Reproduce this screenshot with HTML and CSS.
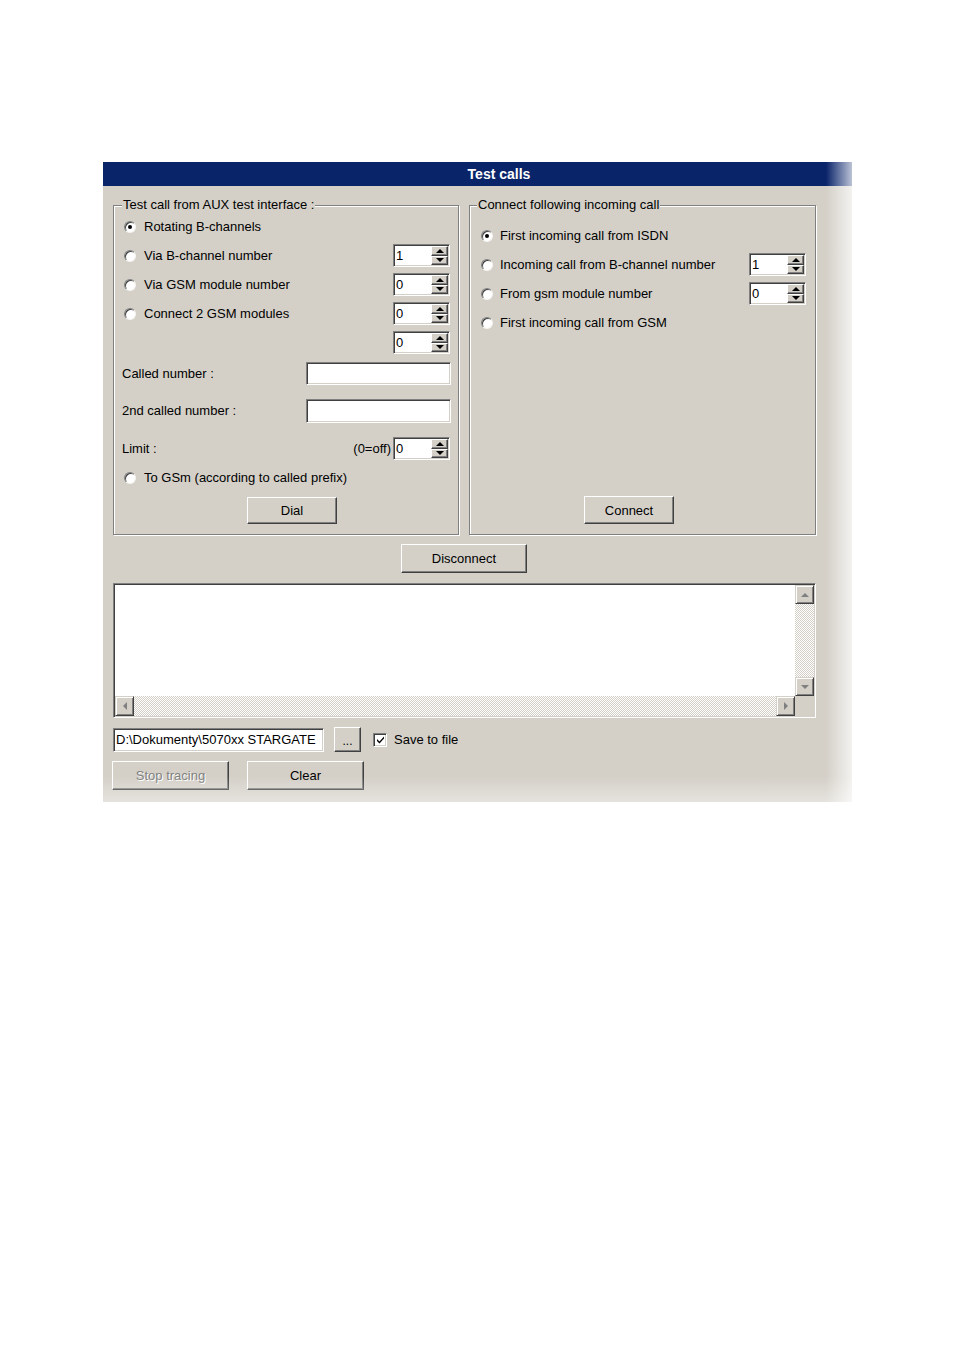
FILE: index.html
```html
<!DOCTYPE html>
<html>
<head>
<meta charset="utf-8">
<title>Test calls</title>
<link rel="stylesheet" href="styles.css">
</head>
<body>
<div class="window">
  <div class="titlebar">Test calls</div>
  <div class="client">
    <div class="groups">
      <fieldset class="group group-left">
        <legend>Test call from AUX test interface :</legend>
        <div class="row"><span class="radio checked"></span><span class="rlabel">Rotating B-channels</span></div>
        <div class="row"><span class="radio"></span><span class="rlabel">Via B-channel number</span>
          <div class="spin"><span class="spin-val">1</span><span class="spin-btns"><span class="sb up"></span><span class="sb down"></span></span></div></div>
        <div class="row"><span class="radio"></span><span class="rlabel">Via GSM module number</span>
          <div class="spin"><span class="spin-val">0</span><span class="spin-btns"><span class="sb up"></span><span class="sb down"></span></span></div></div>
        <div class="row"><span class="radio"></span><span class="rlabel">Connect 2 GSM modules</span>
          <div class="spin"><span class="spin-val">0</span><span class="spin-btns"><span class="sb up"></span><span class="sb down"></span></span></div></div>
        <div class="row">
          <div class="spin"><span class="spin-val">0</span><span class="spin-btns"><span class="sb up"></span><span class="sb down"></span></span></div></div>
        <div class="frow f1"><span>Called number :</span><span class="textbox"></span></div>
        <div class="frow f2"><span>2nd called number :</span><span class="textbox"></span></div>
        <div class="frow f3"><span>Limit :</span><span class="off">(0=off)</span>
          <div class="spin spin-limit"><span class="spin-val">0</span><span class="spin-btns"><span class="sb up"></span><span class="sb down"></span></span></div></div>
        <div class="frow f4"><span class="radio"></span><span class="rlabel">To GSm (according to called prefix)</span></div>
        <div class="btnrow dialrow"><span class="btn btn-dial">Dial</span></div>
      </fieldset>
      <fieldset class="group group-right">
        <legend>Connect following incoming call</legend>
        <div class="row"><span class="radio checked"></span><span class="rlabel r2">First incoming call from ISDN</span></div>
        <div class="row"><span class="radio"></span><span class="rlabel r2">Incoming call from B-channel number</span>
          <div class="spin"><span class="spin-val">1</span><span class="spin-btns"><span class="sb up"></span><span class="sb down"></span></span></div></div>
        <div class="row"><span class="radio"></span><span class="rlabel r2">From gsm module number</span>
          <div class="spin"><span class="spin-val">0</span><span class="spin-btns"><span class="sb up"></span><span class="sb down"></span></span></div></div>
        <div class="row"><span class="radio"></span><span class="rlabel r2">First incoming call from GSM</span></div>
        <div class="btnrow connectrow"><span class="btn btn-connect">Connect</span></div>
      </fieldset>
    </div>
    <div class="discrow"><span class="btn btn-disconnect">Disconnect</span></div>
    <div class="log">
      <div class="log-text"></div>
      <div class="vscroll">
        <span class="sbtn"><span class="arr arr-up"></span></span>
        <span class="track"></span>
        <span class="sbtn"><span class="arr arr-down"></span></span>
      </div>
      <div class="hscroll">
        <span class="sbtn"><span class="arr arr-left"></span></span>
        <span class="track"></span>
        <span class="sbtn"><span class="arr arr-right"></span></span>
      </div>
      <div class="corner"></div>
    </div>
    <div class="filerow">
      <span class="path">D:\Dokumenty\5070xx STARGATE</span>
      <span class="btn btn-dots">...</span>
      <span class="checkbox"><svg width="9" height="9" viewBox="0 0 9 9"><path d="M1 4 L3.5 6.5 L8 1.5 L8 3.5 L3.5 8.5 L1 6 Z" fill="#000"/></svg></span>
      <span class="cblabel">Save to file</span>
    </div>
    <div class="bottomrow">
      <span class="btn btn-wide disabled">Stop tracing</span>
      <span class="btn btn-wide">Clear</span>
    </div>
  </div>
</div>
</body>
</html>
```

FILE: styles.css
```css
body {
  margin: 0;
  background: #fff;
  font-family: "Liberation Sans", Arial, sans-serif;
  font-size: 13px;
  color: #000;
}

.window {
  position: relative;
  width: 749px;
  margin: 162px 0 0 103px;
  background: #d4d0c8;
}

.window::after {
  content: "";
  position: absolute;
  top: 0;
  right: 0;
  bottom: 0;
  width: 26px;
  background: linear-gradient(to right, rgba(255,255,255,0), rgba(255,255,255,0.72));
  pointer-events: none;
}

.window::before {
  content: "";
  position: absolute;
  left: 0;
  right: 0;
  bottom: 0;
  height: 26px;
  background: linear-gradient(to bottom, rgba(255,255,255,0), rgba(255,255,255,0.4));
  pointer-events: none;
  z-index: 1;
}

.titlebar {
  height: 24px;
  background: #0a246a;
  color: #fff;
  font-weight: bold;
  font-size: 14px;
  line-height: 25px;
  text-align: center;
  padding-left: 43px;
}

.client {
  padding: 12px 0 12px 10px;
}

.groups {
  display: flex;
  gap: 10px;
  align-items: stretch;
}

.group {
  margin: 0;
  border: 1px solid #808080;
  box-shadow: inset 1px 1px 0 #fff, 1px 1px 0 #fff;
  display: flex;
  flex-direction: column;
  min-width: 0;
  box-sizing: border-box;
}

.group legend {
  margin-left: 0;
  padding: 0 1px;
  line-height: 14px;
  background: #d4d0c8;
}

.group-left {
  width: 346px;
  padding: 0 8px 10px 8px;
}

.group-right {
  width: 347px;
  padding: 9px 9px 10px 11px;
}

.group-right legend {
  margin-left: -4px;
}

.row {
  height: 29px;
  display: flex;
  align-items: center;
  flex: none;
}

.group-left .radio {
  margin-left: 2px;
}

.radio {
  position: relative;
  width: 12px;
  height: 12px;
  box-sizing: border-box;
  border-radius: 50%;
  background: #fff;
  border: 1px solid;
  border-color: #808080 #f4f3f0 #f4f3f0 #808080;
  box-shadow: inset 1px 1px 0 #404040;
  flex: none;
}

.radio.checked::after {
  content: "";
  position: absolute;
  left: 3px;
  top: 3px;
  width: 4px;
  height: 4px;
  border-radius: 50%;
  background: #000;
}

.rlabel {
  margin-left: 8px;
  white-space: nowrap;
}

.rlabel.r2 {
  margin-left: 7px;
}

.spin {
  margin-left: auto;
  width: 57px;
  height: 23px;
  box-sizing: border-box;
  background: #fff;
  border: 1px solid;
  border-color: #808080 #fff #fff #808080;
  box-shadow: inset 1px 1px 0 #404040, inset -1px -1px 0 #d4d0c8;
  display: flex;
  padding: 1px;
  flex: none;
}

.spin-val {
  flex: 1;
  line-height: 19px;
  padding-left: 1px;
}

.spin-btns {
  width: 17px;
  display: flex;
  flex-direction: column;
}

.sb {
  flex: 1;
  background: #d4d0c8;
  border: 1px solid;
  border-color: #fff #404040 #404040 #fff;
  box-shadow: inset -1px -1px 0 #808080;
  display: flex;
  align-items: center;
  justify-content: center;
}

.sb.up::before {
  content: "";
  border-left: 4px solid transparent;
  border-right: 4px solid transparent;
  border-bottom: 4px solid #000;
}

.sb.down::before {
  content: "";
  border-left: 4px solid transparent;
  border-right: 4px solid transparent;
  border-top: 4px solid #000;
}

.frow {
  height: 23px;
  display: flex;
  align-items: center;
  flex: none;
}

.f1 { margin-top: 5px; }
.f2 { margin-top: 14px; }
.f3 { margin-top: 15px; }
.f4 { margin-top: 6px; }

.textbox {
  margin-left: auto;
  margin-right: -1px;
  width: 145px;
  height: 23px;
  box-sizing: border-box;
  background: #fff;
  border: 1px solid;
  border-color: #808080 #fff #fff #808080;
  box-shadow: inset 1px 1px 0 #404040, inset -1px -1px 0 #d4d0c8;
}

.f2 .textbox {
  height: 24px;
}

.off {
  margin-left: auto;
}

.spin-limit {
  margin-left: 2px;
}

.btnrow {
  display: flex;
  flex: none;
}

.dialrow {
  margin-top: 8px;
}

.connectrow {
  margin-top: auto;
}

.btn {
  display: flex;
  align-items: center;
  justify-content: center;
  box-sizing: border-box;
  background: #d4d0c8;
  border: 1px solid;
  border-color: #fff #404040 #404040 #fff;
  box-shadow: inset -1px -1px 0 #808080;
  white-space: nowrap;
}

.btn-dial {
  margin-left: 125px;
  width: 90px;
  height: 27px;
}

.btn-connect {
  margin-left: 103px;
  width: 90px;
  height: 28px;
}

.discrow {
  margin-top: 9px;
  display: flex;
}

.btn-disconnect {
  margin-left: 288px;
  width: 126px;
  height: 29px;
}

.log {
  margin-top: 10px;
  width: 703px;
  height: 135px;
  box-sizing: border-box;
  background: #fff;
  border: 1px solid;
  border-color: #808080 #fff #fff #808080;
  box-shadow: inset 1px 1px 0 #404040, inset -1px -1px 0 #d4d0c8;
  padding: 1px;
  display: grid;
  grid-template-columns: 1fr 19px;
  grid-template-rows: 1fr 20px;
}

.vscroll {
  display: flex;
  flex-direction: column;
}

.hscroll {
  display: flex;
}

.track {
  flex: 1;
  background: repeating-conic-gradient(#d4d0c8 0% 25%, #fff 0% 50%) 0 0 / 2px 2px;
}

.sbtn {
  width: 19px;
  height: 19px;
  box-sizing: border-box;
  background: #d4d0c8;
  border: 1px solid;
  border-color: #d4d0c8 #404040 #404040 #d4d0c8;
  box-shadow: inset 1px 1px 0 #fff, inset -1px -1px 0 #808080;
  display: flex;
  align-items: center;
  justify-content: center;
  flex: none;
}

.hscroll .sbtn {
  height: 20px;
}

.arr-up {
  border-left: 4px solid transparent;
  border-right: 4px solid transparent;
  border-bottom: 4px solid #808080;
}

.arr-down {
  border-left: 4px solid transparent;
  border-right: 4px solid transparent;
  border-top: 4px solid #808080;
}

.arr-left {
  border-top: 4px solid transparent;
  border-bottom: 4px solid transparent;
  border-right: 4px solid #808080;
}

.arr-right {
  border-top: 4px solid transparent;
  border-bottom: 4px solid transparent;
  border-left: 4px solid #808080;
}

.corner {
  background: #d4d0c8;
}

.filerow {
  margin-top: 9px;
  height: 25px;
  display: flex;
  align-items: center;
}

.path {
  width: 211px;
  height: 24px;
  margin-top: 1px;
  box-sizing: border-box;
  background: #fff;
  border: 1px solid;
  border-color: #808080 #fff #fff #808080;
  box-shadow: inset 1px 1px 0 #404040, inset -1px -1px 0 #d4d0c8;
  padding: 0 0 0 2px;
  line-height: 22px;
  white-space: nowrap;
  overflow: hidden;
}

.btn-dots {
  margin-left: 10px;
  width: 27px;
  height: 25px;
  align-items: flex-end;
  padding-bottom: 4px;
  font-size: 12px;
  line-height: 12px;
}

.checkbox {
  margin-left: 12px;
  width: 14px;
  height: 14px;
  box-sizing: border-box;
  background: #fff;
  border: 1px solid;
  border-color: #808080 #fff #fff #808080;
  box-shadow: inset 1px 1px 0 #404040, inset -1px -1px 0 #d4d0c8;
  display: flex;
  align-items: center;
  justify-content: center;
}

.cblabel {
  margin-left: 7px;
}

.bottomrow {
  margin-top: 9px;
  margin-left: -1px;
  display: flex;
  gap: 18px;
}

.btn-wide {
  width: 117px;
  height: 29px;
}

.btn.disabled {
  color: #808080;
  text-shadow: 1px 1px 0 #fff;
}
```
